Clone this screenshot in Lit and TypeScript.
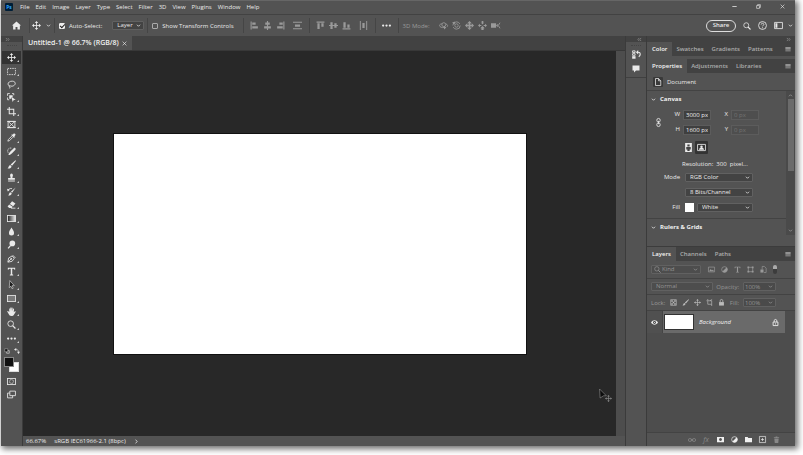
import { LitElement, html, css, svg, type TemplateResult } from "lit";
import { customElement, state } from "lit/decorators.js";
import { classMap } from "lit/directives/class-map.js";

/* Every glyph is drawn on a 16 x 16 grid. Plain shapes are filled, ".l" shapes are stroked. */
const glyphs: Record<string, unknown> = {
  move: svg`<path class="l" d="M8 2v12M2 8h12"/><path d="M8 0l3 3.6H5zM8 16l3-3.6H5zM0 8l3.6-3v6zM16 8l-3.6-3v6z"/>`,
  marquee: svg`<rect class="l" x="1" y="2.5" width="14" height="11" stroke-dasharray="2.6 1.6"/>`,
  lasso: svg`<path class="l" d="M4.5 11C1 9 1 5.500 4 3.500s8-2 10 .5-.5 6.500-5 7c-2 .2-3-.5-4-1-1.500-.3-2 1.500-.5 2s1 2-.5 3"/>`,
  objsel: svg`<path class="l" d="M1 5V1h4M9 1h3v3M1 8v4h3"/><path d="M4 4h6v3.500H7.500V10H4zM8 7l7.500 5-3.500.4L10 16z"/>`,
  crop: svg`<path class="l" style="stroke-width:1.800" d="M4 0v12h12M0 4h12v12"/>`,
  frame: svg`<path class="l" d="M2 2.500h12v11H2zM2 2.500l12 11M14 2.500l-12 11M0 2.500h16M0 13.500h16"/>`,
  eyedrop: svg`<path d="M10 3l1.500-1.500c2-2 5 1 3 3L13 6l1 1-1.500 1.500-5-5L9 2z"/><path class="l" d="M8.500 5.500L2.500 11.500 1.500 14.500l3-1 6-6"/>`,
  heal: svg`<path d="M6 8l6-6c2-2 4.500.5 3 3l-6 6-4 3c-2 1-3-1-2-2z"/><path class="l" stroke-dasharray="2 1.500" d="M2 10C-.5 5 3 1 8 2"/>`,
  brush: svg`<path d="M15 .5c1 .5 1 1 .5 1.700L9 10 6.500 8zM5.500 9l2.500 2c0 3-3 4.500-7 4 2-1 1.500-5 4.500-6z"/>`,
  stamp: svg`<path d="M5.500 4a2.500 3 0 1 1 5 0c0 2-1 2-.8 5H14v3H2V9h4.300C6.500 6 5.500 6 5.500 4zM2 13.500h12V15H2z"/>`,
  history: svg`<path d="M15.500 1L9 10 7 8.500zM6 9.500l2.500 2C8 14 5 15.500 2 15c2-1 1.500-5 4-5.500z"/><path class="l" d="M2 6c1-3 4-4 7-3"/><path d="M0 3l5 2-3.500 3z"/>`,
  eraser: svg`<path d="M9 2l6 4-4 5-6-4zM4 8l6 4-1.500 2H4l-3-2.500z"/><path class="l" d="M7 14.500h8"/>`,
  gradient: svg`<defs><linearGradient id="ramp"><stop stop-color="#222"/><stop offset="1" stop-color="#eee"/></linearGradient></defs><rect class="l" x="1" y="2.500" width="14" height="11" style="fill:url(#ramp)"/>`,
  blur: svg`<path d="M8 1c2 4 4.500 6 4.500 9.500a4.500 4.500 0 0 1-9 0C3.500 7 6 5 8 1z"/>`,
  dodge: svg`<circle cx="9.500" cy="6" r="5"/><path class="l" style="stroke-width:2.200" d="M6.500 9.500L2 15"/>`,
  pen: svg`<path class="l" d="M1.500 14.500L3 7l6-3.500 4 4L9 13zM2 14l5-5M10 2l5 5"/><circle cx="7.500" cy="8.500" r="1.500"/>`,
  type: svg`<path d="M1.500 1.500h13V5h-1.300c-.3-1.500-.7-2-2-2H9.300v10l1.700.7V15H5v-1.300l1.700-.7V3H4.800c-1.300 0-1.700.5-2 2H1.500z"/>`,
  pathsel: svg`<path d="M5 1l8 9H9l2 4.500-2 1L7 11l-3 2.500z" style="fill:#1c1c1c;stroke:currentColor"/>`,
  rect: svg`<rect class="l" x="1" y="2.500" width="14" height="11" style="fill:#7a7a7a"/>`,
  hand: svg`<path d="M4 9V3.500c0-1 1.600-1 1.600 0V7L6 1.500c0-1 1.700-1 1.700 0V7l.6-5.500c.2-1 1.700-.9 1.600.2L10 7.200l1-4c.3-1 1.700-.7 1.600.3L12 9.500l1.500-1.600c1-1 2.500-.2 1.800 1L12 14c-1 1.300-2 2-4 2-3 0-4-1.500-5-3.500L.6 8.600c-.5-1 .9-1.800 1.700-1z"/>`,
  zoom: svg`<circle class="l" cx="6.500" cy="6.500" r="5"/><path class="l" style="stroke-width:2.200" d="M10 10l5 5"/>`,
  dots: svg`<circle cx="2" cy="8" r="2"/><circle cx="8" cy="8" r="2"/><circle cx="14" cy="8" r="2"/>`,
  mini: svg`<path class="l" d="M7 7h7v7H7z" /><path d="M2 2h8v8H2z" style="fill:#111;stroke:currentColor"/>`,
  swap: svg`<path class="l" d="M4 4c6-.5 8 1 8 8"/><path d="M0 4l6-4v8zM8 10h8l-4 6z"/>`,
  mask: svg`<rect class="l" x="1" y="2.500" width="14" height="11"/><circle class="l" cx="8" cy="8" r="3.500" stroke-dasharray="1.500 1"/>`,
  screen: svg`<path class="l" d="M5 2h10v8H5zM5 5.500H1V14h9v-4"/>`,
  home: svg`<path d="M8 1l8 7h-2v7h-4.300v-4.500H6.300V15H2V8H0z"/>`,
  chev: svg`<path class="l" style="stroke-width:2.500" d="M3 5.500l5 5 5-5"/>`,
  up: svg`<path class="l" style="stroke-width:2.500" d="M3 10.500l5-5 5 5"/>`,
  right: svg`<path class="l" style="stroke-width:2.500" d="M5 2l5 6-5 6"/>`,
  close: svg`<path class="l" style="stroke-width:2" d="M2 2l12 12M14 2L2 14"/>`,
  min: svg`<path class="l" style="stroke-width:2.500" d="M1 8h14"/>`,
  restore: svg`<path class="l" style="stroke-width:2" d="M2 5h9v9H2zM5 5V2h9v9h-3"/>`,
  alignL: svg`<path d="M1 1h2v14H1zM4 2.500h6v4H4zM4 9.500h10v4H4z"/>`,
  alignC: svg`<path d="M7 0h2v16H7zM4 2.500h8v4H4zM2 9.500h12v4H2z"/>`,
  alignR: svg`<path d="M13 1h2v14h-2zM6 2.500h6v4H6zM2 9.500h10v4H2z"/>`,
  distV: svg`<path d="M0 1.500h16v1.700H0zM0 12.800h16v1.700H0zM3.500 6h9v4h-9z"/>`,
  alignT: svg`<path d="M1 1h14v2H1zM2.500 4h4v10h-4zM9.500 4h4v6h-4z"/>`,
  alignM: svg`<path d="M0 7h16v2H0zM2.500 2h4v12h-4zM9.500 4h4v8h-4z"/>`,
  alignB: svg`<path d="M1 13h14v2H1zM2.500 2h4v10h-4zM9.500 6h4v6h-4z"/>`,
  distH: svg`<path d="M1.500 0h1.700v16H1.500zM12.800 0h1.700v16h-1.700zM6 3.500h4v9H6z"/>`,
  orbit: svg`<path class="l" d="M10 11.500c-5 1-9-1-9-3.500s3-3 5-3M12 5c4 1.500 4 4 2 5.500"/><circle class="l" cx="8.500" cy="6.500" r="3.500"/><path d="M9 9l4 2.500L9 15z"/>`,
  roll: svg`<circle class="l" cx="8" cy="8" r="6.500" stroke-dasharray="17 3"/><circle class="l" cx="8" cy="8" r="3"/><path d="M0 3l5-2v5z"/>`,
  pan: svg`<path class="l" style="stroke-width:3" d="M8 3v10M3 8h10"/><path d="M8 0l4 4H4zM8 16l4-4H4zM0 8l4-4v8zM16 8l-4-4v8z"/>`,
  slide: svg`<path d="M8 6L5.500 3h5zM6.500 0h3v3h-3zM8 9l4 4h-2v3H6v-3H4zM0 8l3.500-3v2H6v2H3.500v2zM16 8l-3.500-3v2H10v2h2.500v2z"/>`,
  camera: svg`<path d="M0 4h9v8H0zM9 8l3-3v6z"/><path class="l" d="M16 3l-3 5 3 5"/>`,
  help: svg`<circle class="l" cx="8" cy="8" r="7"/><path class="l" d="M5.700 6.300c0-3 4.700-3 4.700 0 0 1.500-2.400 1.700-2.400 3.200"/><circle cx="8" cy="12" r="1"/>`,
  workspace: svg`<path class="l" d="M1 2.500h14v11H1z"/><path d="M2.500 4H6v8H2.500z"/>`,
  menu: svg`<path d="M1 2.500h14v2H1zM1 5.900h14v2H1zM1 9.300h14v2H1zM1 12.600h14v1.500H1z"/>`,
  histPanel: svg`<path class="l" d="M1 1.500h4.500v3H1zM1 6.500h4.500v3H1z"/><path d="M.3 11h6v4.500h-6z"/><path class="l" style="stroke-width:2" d="M9 4h2c5 0 4.500 6 1 8"/><path d="M11 0v8L7 4z"/>`,
  comment: svg`<path d="M1 1h14v10H8l-4 4v-4H1z"/>`,
  dblL: svg`<path class="l" style="stroke-width:2" d="M7 3L3 8l4 5M13 3L9 8l4 5"/>`,
  dblR: svg`<path class="l" style="stroke-width:2" d="M3 3l4 5-4 5M9 3l4 5-4 5"/>`,
  doc: svg`<path class="l" d="M3 1h6l4.500 4.500V15H3zM9 1v4.500h4.500"/>`,
  link: svg`<rect class="l" x="5" y=".8" width="6" height="6.500" rx="3"/><rect class="l" x="5" y="8.700" width="6" height="6.500" rx="3"/><path class="l" d="M8 5v6"/>`,
  portrait: svg`<path d="M2 0h12v16H2z"/><path fill="#444" d="M6 2.500h4V6H6zM4 7h8v4.500h-2V14H6v-2.500H4z"/>`,
  landscape: svg`<path class="l" d="M1 2.500h14v11H1z"/><circle cx="8" cy="6.500" r="2.200"/><path d="M3.500 12c0-4.500 9-4.500 9 0z"/>`,
  image: svg`<path class="l" d="M1 2.500h14v11H1z"/><path d="M2.500 12l3.500-5 3 3 2-1.500 3 3.500z"/>`,
  adjust: svg`<circle class="l" cx="8" cy="8" r="6.500"/><path d="M12.600 3.400a6.500 6.500 0 0 1-9.200 9.200z"/>`,
  shape: svg`<path class="l" d="M3 3h10v10H3z"/><path d="M1 1h4v4H1zM11 1h4v4h-4zM1 11h4v4H1zM11 11h4v4h-4z"/>`,
  smart: svg`<path class="l" d="M5 8V1h5l4 4v10H9"/><path d="M1 8h7v7H1z"/>`,
  checker: svg`<path class="l" d="M1.500 1.500h13v13h-13z"/><path d="M3 3h3.300v3.300H3zM9.700 3H13v3.300H9.700zM6.300 6.300h3.400v3.400H6.300zM3 9.700h3.300V13H3zM9.700 9.700H13V13H9.700z"/>`,
  artboard: svg`<path class="l" d="M4 0v12M4 4h9v12M1 4h2M4 12h9M9 4l5-3"/>`,
  lock: svg`<path d="M2.500 7h11v8h-11z"/><path class="l" style="stroke-width:1.800" d="M5 7V4c0-4 6-4 6 0v3"/>`,
  lockLine: svg`<path class="l" style="stroke-width:2" d="M2.500 7h11v8h-11zM5 7V4c0-4 6-4 6 0v3M8 10v2.500"/>`,
  eye: svg`<path d="M0 8c4-6.500 12-6.500 16 0-4 6.500-12 6.500-16 0z"/><circle cx="8" cy="8" r="3.300" fill="#454545"/><circle cx="8" cy="8" r="1.300"/>`,
  chain: svg`<rect class="l" x=".8" y="5" width="6.500" height="6" rx="3"/><rect class="l" x="8.700" y="5" width="6.500" height="6" rx="3"/><path class="l" d="M5 8h6"/>`,
  maskAdd: svg`<path fill-rule="evenodd" d="M0 2h16v12H0zM8 4.700a3.300 3.300 0 1 0 .01 0z"/>`,
  folder: svg`<path d="M0 2.500h6l1.500 2H16V14H0z"/>`,
  plus: svg`<path class="l" d="M1 1h14v14H1zM8 4.500v7M4.500 8h7"/>`,
  trash: svg`<path d="M2 3h12v1.700H2zM6 1h4v2H6zM3 5.500h10L12 16H4z"/>`,
  cursor: svg`<path d="M1 0l12 12H8l-6 4z" style="fill:#0c0c0c;stroke:#999;stroke-width:1"/>`,
};

const icon = (name: string, size = "s9"): TemplateResult =>
  html`<svg class="icon ${size}" viewBox="0 0 16 16" aria-hidden="true">${glyphs[name]}</svg>`;

const button = (name: string, label: string, size = "s9", extra = ""): TemplateResult =>
  html`<button class="btn ${extra}" aria-label=${label} title=${label}>${icon(name, size)}</button>`;

const pick = (label: string, options: string[], width: string, dim = false): TemplateResult => html`
  <span class="pick ${width} ${dim ? "dim" : ""}">
    <select aria-label=${label}>${options.map((o) => html`<option>${o}</option>`)}</select>${icon("chev", "s5")}
  </span>`;

const menus = ["File", "Edit", "Image", "Layer", "Type", "Select", "Filter", "3D", "View", "Plugins", "Window", "Help"];

const tools: [string, string][] = [
  ["move", "Move"], ["marquee", "Rectangular Marquee"], ["lasso", "Lasso"], ["objsel", "Object Selection"],
  ["crop", "Crop"], ["frame", "Frame"], ["eyedrop", "Eyedropper"], ["heal", "Spot Healing Brush"],
  ["brush", "Brush"], ["stamp", "Clone Stamp"], ["history", "History Brush"], ["eraser", "Eraser"],
  ["gradient", "Gradient"], ["blur", "Blur"], ["dodge", "Dodge"], ["pen", "Pen"], ["type", "Type"],
  ["pathsel", "Path Selection"], ["rect", "Rectangle"], ["hand", "Hand"], ["zoom", "Zoom"], ["dots", "Edit Toolbar"],
];

@customElement("app-root")
export class AppRoot extends LitElement {
  @state() private tool = "move";

  static styles = css`
    :host {
      display: block;
      box-sizing: border-box;
      min-height: 100vh;
      padding: 0 8px 9px 1px;
      background: #fff;
      color: #eaeaea;
      font: 6px/10px "Open Sans", "Noto Sans", sans-serif;
    }
    * { box-sizing: border-box; }
    button, select, input { font: inherit; color: inherit; margin: 0; padding: 0; border: 0; background: none; border-radius: 0; }
    .window {
      display: flex;
      flex-direction: column;
      min-height: calc(100vh - 9px);
      background: #535353;
      box-shadow: 2px 2px 6px 1px #00000090;
      border-top: 1px solid #666;
    }
    .icon { display: block; flex: none; fill: currentColor; overflow: visible; }
    .icon .l { fill: none; stroke: currentColor; stroke-width: 1.5; }
    .s5 { width: 5px; height: 5px; }
    .s6 { width: 6px; height: 6px; }
    .s7 { width: 7px; height: 7px; }
    .s8 { width: 8px; height: 8px; }
    .s9 { width: 9px; height: 9px; }
    .btn { display: flex; align-items: center; justify-content: center; min-width: 13px; height: 13px; position: relative; }
    .grow { flex: 1; }
    .off { color: #9a9a9a; }

    .menubar { display: flex; align-items: center; height: 14px; padding: 0 6px 2px 4px; border-bottom: 1px solid #424242; }
    .logo { width: 8px; height: 8px; border-radius: 1px; background: #001e36; color: #31a8ff; font-size: 5px; line-height: 8px; font-weight: 700; text-align: center; margin-right: 7px; }
    nav { display: flex; gap: 6px; }
    nav a { color: inherit; text-decoration: none; }
    .winctl { display: flex; gap: 11px; }

    .options { display: flex; align-items: center; height: 21px; padding: 0 2px 0 9px; }
    .options .rule { align-self: stretch; width: 1px; margin: 3px 4px 3px 5px; background: #454545; }
    .options .rule.tight { margin: 3px 0 3px 6px; }
    .options .rule.near { margin: 3px 0 3px 3px; }
    .options > .icon { margin-left: 3px; }
    .options label { display: flex; align-items: center; gap: 4px; }
    .options .group { display: flex; align-items: center; }
    .options .auto { margin: 0 10px 0 4px; }
    .options .show { margin: 0 4px; }
    .options .apart { margin-left: 4px; }
    .options .mode { margin-right: 7px; }
    .options .end { gap: 3px; margin-left: 4px; }
    .check { appearance: none; width: 6px; height: 6px; border: 1px solid #aaa; border-radius: 1px; display: grid; place-items: center; }
    .check:checked { background: #eee; border-color: #eee; }
    .check:checked::after { content: ""; width: 4px; height: 2px; border: solid #222; border-width: 0 0 1px 1px; transform: rotate(-45deg); }
    .share { width: 30px; height: 12px; border: 1px solid #ddd; border-radius: 6px; font-weight: 600; line-height: 9px; text-align: center; }

    .pick { position: relative; display: flex; align-items: center; height: 9px; background: #434343; border: 1px solid #616161; border-radius: 1px; }
    .pick select { appearance: none; flex: 1; min-width: 0; height: 9px; padding-left: 4px; line-height: 9px; outline: 0; }
    .pick svg { position: absolute; right: 2px; pointer-events: none; }
    .pick.dim { background: #4d4d4d; color: #949494; }
    .w32 { width: 32px; } .w50 { width: 50px; } .w56 { width: 56px; } .w62 { width: 62px; } .w68 { width: 68px; }

    .work { flex: 1; display: grid; grid-template-columns: 21px minmax(0, 1fr) 20px 148px; column-gap: 1px; background: #3b3b3b; }
    .strip { height: 6px; background: #424242; display: flex; align-items: center; color: #999; padding: 0 4px; }
    .strip.end { justify-content: flex-end; }

    .toolbox { background: #535353; display: flex; flex-direction: column; align-items: center; }
    .toolbox .strip { align-self: stretch; }
    .grip { width: 10px; height: 2px; margin: 3px 0 4px; border-top: 1px dotted #444; }
    .tools { display: grid; grid-template-rows: repeat(22, 1fr); height: 294px; width: 19px; }
    .tools .btn { height: auto; width: 19px; }
    .tools .btn::after { content: ""; position: absolute; right: 2px; bottom: 2px; border: 1px solid; border-color: transparent #ccc #ccc transparent; }
    .tools .active { background: #333; }
    .pair { display: flex; gap: 4px; margin: 3px 0; }
    .colors { display: grid; grid-template-columns: repeat(3, 5px); grid-template-rows: repeat(3, 5px); margin-bottom: 3px; }
    .fg, .bg { width: 10px; height: 10px; border: 1px solid #ddd; }
    .bg { grid-area: 2 / 2 / 4 / 4; background: #fff; }
    .fg { grid-area: 1 / 1 / 3 / 3; background: #111; border-color: #888; z-index: 1; }

    .document { display: grid; grid-template-rows: 15px 1fr 10px; grid-template-columns: minmax(0, 1fr) 9px; background: #4d4d4d; }
    .tabs { display: flex; background: #424242; height: 14px; }
    .document > .tabs { grid-column: 1 / 3; height: 15px; border-bottom: 1px solid #383838; }
    .doctab { display: flex; align-items: center; gap: 3px; padding: 0 5px; background: #535353; font-size: 7px; font-weight: 600; color: #f0f0f0; }
    .pasteboard { position: relative; display: flex; align-items: center; justify-content: center; background: #282828; }
    .artboard { width: 412px; max-width: 90%; aspect-ratio: 412 / 220; background: #fff; outline: 1px solid #111; }
    .pointer { position: absolute; right: 4px; bottom: 34px; width: 13px; height: 13px; color: #8a8a8a; }
    .pointer .s9 { position: absolute; left: 0; top: 0; }
    .pointer .s7 { position: absolute; right: 0; bottom: 0; }
    .status { grid-column: 1 / 3; display: flex; align-items: center; background: #535353; padding-left: 3px; gap: 8px; }

    .dock { background: #535353; }
    .dock .icons { display: flex; flex-direction: column; align-items: center; gap: 1px; padding: 3px 0 2px; border-bottom: 1px solid #404040; }
    .dock .grip { margin: 0; }

    .panels { display: flex; flex-direction: column; background: #535353; }
    .panels .tabs { flex: none; align-items: stretch; padding-right: 3px; color: #adadad; font-weight: 600; }
    .panels .tabs button { padding: 0 4px; }
    .panels .tabs button.on { background: #535353; color: #f4f4f4; padding: 0 5px; }
    .panels .tabs .btn { padding: 0; min-width: 8px; }
    .panels .tabs + .tabs { margin-top: 3px; }
    .kind { display: flex; align-items: center; gap: 4px; height: 18px; padding-left: 6px; border-bottom: 1px solid #434343; }
    .kind .box { padding: 1px; background: #393939; border-radius: 1px; }
    .scroller { display: grid; grid-template-columns: minmax(0, 1fr) 9px; height: 141px; margin-bottom: 14px; }
    .bar { display: flex; flex-direction: column; align-items: center; background: #4a4a4a; color: #999; padding: 2px 0; }
    .thumb { width: 6px; height: 72px; background: #6b6b6b; margin: 1px 0 auto; }
    h3 { display: flex; align-items: center; gap: 4px; height: 16px; margin: 0; padding-left: 4px; font-size: 6px; font-weight: 700; color: #f0f0f0; }
    .fields { display: grid; grid-template-columns: 16px 14px 28px 14px 28px; column-gap: 3px; align-items: center; grid-auto-rows: auto; height: 112px; align-content: start; border-bottom: 1px solid #434343; }
    .fields > * { height: 15px; line-height: 15px; }
    .fields > label { text-align: right; }
    .fields .chain { grid-row: 1 / 3; justify-self: end; height: auto; }
    .fields input { width: 28px; height: 10px; line-height: 8px; padding: 0 2px; background: #3f3f3f; border: 1px solid #5c5c5c; color: #f0f0f0; }
    .fields input:disabled { background: #4e4e4e; color: #747474; }
    .fields .span { grid-column: 1 / 6; display: flex; align-items: center; }
    .fields .lab { width: 33px; margin-right: 5px; text-align: right; }
    .fields .orient { padding-left: 35px; height: 21px; }
    .orient .btn { border-radius: 1px; }
    .orient .on { background: #333; }
    .fields .res { padding-left: 35px; height: 12px; }
    .chip { width: 9px; height: 9px; background: #fff; margin-right: 3px; }

    .layers { flex: 1; display: flex; flex-direction: column; background: #4d4d4d; border-top: 1px solid #3c3c3c; }
    .row { display: flex; align-items: center; height: 16px; padding: 0 4px; background: #535353; border-bottom: 1px solid #434343; }
    .row.filter { gap: 4px; height: 18px; }
    .filter .pick select { padding-left: 10px; }
    .filter .pick .lens { left: 2px; right: auto; }
    .filter .types { display: flex; gap: 5px; padding-left: 2px; }
    .filter .types .btn { min-width: 8px; }
    .toggle { width: 4px; height: 9px; background: linear-gradient(#aaa 4px, #3c3c3c 4px); border-radius: 2px; margin-left: 2px; }
    .row .amount { display: flex; align-items: center; gap: 4px; margin-left: auto; padding-right: 15px; color: #949494; }
    .row .amount .pick input { width: 24px; height: 9px; padding-left: 1px; }
    .row .amount .pick { width: 33px; background: #4a4a4a; }
    .locks { display: flex; gap: 4px; padding-left: 4px; color: #bbb; }
    .locks .btn, .foot .btn { min-width: 8px; }
    .layer { display: flex; height: 22px; padding-right: 10px; }
    .layer .vis { width: 16px; height: 22px; background: #505050; border-right: 1px solid #444; }
    .layer .body { flex: 1; display: flex; align-items: center; padding: 0 6px 0 1px; background: #6a6a6a; font-style: italic; color: #f0f0f0; }
    .thumbnail { width: 30px; height: 16px; background: #fff; border: 1px solid #333; margin-right: 5px; }
    .foot { margin-top: auto; display: flex; align-items: center; justify-content: flex-end; gap: 6px; height: 14px; padding-right: 15px; background: #535353; border-top: 1px solid #434343; color: #f0f0f0; }
    .foot .off { color: #888; }
    .fx { font-style: italic; font-size: 7px; }
  `;

  private panelTabs(names: string[]) {
    return html`<div class="tabs" role="tablist">
      ${names.map((n, i) => html`<button role="tab" aria-selected=${i === 0} class=${classMap({ on: i === 0 })}>${n}</button>`)}
      <span class="grow"></span>${button("menu", "Panel menu", "s6", "end")}
    </div>`;
  }

  private amount(id: string, label: string) {
    return html`<span class="amount"><label for=${id}>${label}</label>
      <span class="pick dim"><input id=${id} value="100%" disabled />${icon("chev", "s5")}</span></span>`;
  }

  private optionsBar() {
    return html`<div class="options">
      ${button("home", "Home", "s9")}
      <span class="rule tight"></span>
      ${button("move", "Tool preset", "s9")}${icon("chev", "s5")}
      <span class="rule near"></span>
      <label class="auto"><input class="check" type="checkbox" checked />Auto-Select:</label>
      ${pick("Auto-select target", ["Layer", "Group"], "w32")}
      <span class="rule near"></span>
      <label class="show"><input class="check" type="checkbox" />Show Transform Controls</label>
      <span class="rule"></span>
      <span class="group off">
        ${button("alignL", "Align left")}${button("alignC", "Align centers")}${button("alignR", "Align right")}
        ${button("distV", "Distribute vertically", "s9", "apart")}
      </span>
      <span class="rule"></span>
      <span class="group off">
        ${button("alignT", "Align top")}${button("alignM", "Align middle")}${button("alignB", "Align bottom")}
        ${button("distH", "Distribute horizontally", "s9", "apart")}
      </span>
      <span class="rule"></span>${button("dots", "More")}<span class="rule"></span>
      <span class="off mode">3D Mode:</span>
      <span class="group off">
        ${button("orbit", "Orbit")}${button("roll", "Roll")}${button("pan", "Pan")}${button("slide", "Slide")}${button("camera", "Zoom camera")}
      </span>
      <span class="grow"></span>
      <button class="share">Share</button>
      <span class="group end">${button("zoom", "Search", "s8")}${button("help", "Help")}${button("workspace", "Workspace")}${icon("chev", "s5")}</span>
    </div>`;
  }

  private properties() {
    return html`
      <div class="kind"><span class="box">${icon("doc", "s8")}</span>Document</div>
      <div class="scroller">
        <div>
          <h3>${icon("chev", "s5")}Canvas</h3>
          <div class="fields">
            <span class="chain">${icon("link", "s9")}</span>
            <label for="w">W</label><input id="w" value="3000 px" />
            <label for="x">X</label><input id="x" value="0 px" disabled />
            <label for="h">H</label><input id="h" value="1600 px" />
            <label for="y">Y</label><input id="y" value="0 px" disabled />
            <div class="span orient">${button("portrait", "Portrait")}${button("landscape", "Landscape", "s9", "on")}</div>
            <div class="span res">Resolution:&nbsp; 300&nbsp; pixel...</div>
            <div class="span"><span class="lab">Mode</span>${pick("Mode", ["RGB Color"], "w68")}</div>
            <div class="span"><span class="lab"></span>${pick("Bit depth", ["8 Bits/Channel"], "w68")}</div>
            <div class="span"><span class="lab">Fill</span><span class="chip"></span>${pick("Fill", ["White"], "w56")}</div>
          </div>
          <h3>${icon("chev", "s5")}Rulers &amp; Grids</h3>
        </div>
        <div class="bar">${icon("up", "s5")}<span class="thumb"></span>${icon("chev", "s5")}</div>
      </div>`;
  }

  private layers() {
    return html`<div class="layers">
      ${this.panelTabs(["Layers", "Channels", "Paths"])}
      <div class="row filter off">
        <span class="pick w50 dim"><svg class="icon s7 lens" viewBox="0 0 16 16" aria-hidden="true">${glyphs.zoom}</svg>
          <select aria-label="Filter kind"><option>Kind</option></select>${icon("chev", "s5")}</span>
        <span class="types">
          ${button("image", "Pixel layers", "s7")}${button("adjust", "Adjustment layers", "s7")}${button("type", "Type layers", "s7")}
          ${button("shape", "Shape layers", "s7")}${button("smart", "Smart objects", "s7")}
        </span>
        <button class="toggle" aria-label="Filtering on or off"></button>
      </div>
      <div class="row">${pick("Blend mode", ["Normal"], "w62", true)}${this.amount("opacity", "Opacity:")}</div>
      <div class="row"><span class="off">Lock:</span>
        <span class="locks">
          ${button("checker", "Lock transparency", "s7")}${button("brush", "Lock pixels", "s7")}${button("move", "Lock position", "s7")}
          ${button("artboard", "Lock nesting", "s7")}${button("lock", "Lock all", "s7")}
        </span>
        ${this.amount("fill", "Fill:")}
      </div>
      <div class="layer">
        ${button("eye", "Toggle visibility", "s7", "vis")}
        <div class="body"><span class="thumbnail"></span>Background<span class="grow"></span>${icon("lockLine", "s7")}</div>
      </div>
      <div class="foot">
        ${button("chain", "Link layers", "s8", "off")}
        <button class="btn off fx" aria-label="Layer style">fx</button>
        ${button("maskAdd", "Add mask", "s7")}${button("adjust", "New adjustment layer", "s7")}${button("folder", "New group", "s7")}
        ${button("plus", "New layer", "s7")}${button("trash", "Delete layer", "s7", "off")}
      </div>
    </div>`;
  }

  render() {
    return html`<div class="window">
      <header class="menubar">
        <span class="logo">Ps</span>
        <nav>${menus.map((m) => html`<a href="#">${m}</a>`)}</nav>
        <span class="grow"></span>
        <span class="winctl">${button("min", "Minimize", "s5")}${button("restore", "Restore", "s5")}${button("close", "Close", "s5")}</span>
      </header>
      ${this.optionsBar()}
      <main class="work">
        <aside class="toolbox">
          <div class="strip">${icon("dblR", "s5")}</div>
          <span class="grip"></span>
          <div class="tools">
            ${tools.map(([id, label]) => html`<button class="btn ${classMap({ active: this.tool === id })}"
              aria-label=${label} title=${label} @click=${() => (this.tool = id)}>${icon(id)}</button>`)}
          </div>
          <div class="pair">${icon("mini", "s6")}${icon("swap", "s6")}</div>
          <div class="colors"><span class="fg"></span><span class="bg"></span></div>
          ${button("mask", "Quick mask", "s9")}${button("screen", "Screen mode")}
        </aside>
        <section class="document">
          <div class="tabs"><span class="doctab">Untitled-1 @ 66.7% (RGB/8)${icon("close", "s5")}</span></div>
          <div class="pasteboard">
            <div class="artboard"></div>
            <span class="pointer">${icon("cursor", "s9")}${icon("move", "s7")}</span>
          </div>
          <span></span>
          <footer class="status"><span>66.67%</span><span>sRGB IEC61966-2.1 (8bpc)</span>${icon("right", "s5")}</footer>
        </section>
        <aside class="dock">
          <div class="strip end">${icon("dblL", "s5")}</div>
          <div class="icons"><span class="grip"></span>${button("histPanel", "History")}${button("comment", "Comments", "s8")}</div>
        </aside>
        <aside class="panels">
          <div class="strip end">${icon("dblR", "s5")}</div>
          ${this.panelTabs(["Color", "Swatches", "Gradients", "Patterns"])}
          ${this.panelTabs(["Properties", "Adjustments", "Libraries"])}
          ${this.properties()}
          ${this.layers()}
        </aside>
      </main>
    </div>`;
  }
}
